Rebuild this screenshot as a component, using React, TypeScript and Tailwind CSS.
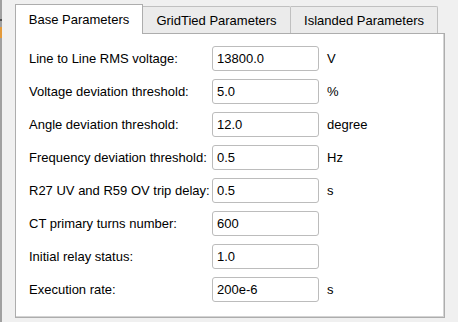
import React from "react";

const rows: { label: string; value: string; unit: string }[] = [
  { label: "Line to Line RMS voltage:", value: "13800.0", unit: "V" },
  { label: "Voltage deviation threshold:", value: "5.0", unit: "%" },
  { label: "Angle deviation threshold:", value: "12.0", unit: "degree" },
  { label: "Frequency deviation threshold:", value: "0.5", unit: "Hz" },
  { label: "R27 UV and R59 OV trip delay:", value: "0.5", unit: "s" },
  { label: "CT primary turns number:", value: "600", unit: "" },
  { label: "Initial relay status:", value: "1.0", unit: "" },
  { label: "Execution rate:", value: "200e-6", unit: "s" },
];

export default function App() {
  return (
    <div className="w-[458px] h-[322px] bg-[#f0f0f0] flex overflow-hidden font-['Liberation_Sans',Arial,sans-serif] text-[13px] text-black">
      <div className="w-[2px] flex flex-col">
        <div className="h-[19px] bg-[#a0a0a0]" />
        <div className="h-[2px] bg-[#505050]" />
        <div className="h-[6px] bg-[#a0a0a0]" />
        <div className="h-[11px] bg-[#e39a3b]" />
        <div className="flex-1 bg-[#a0a0a0]" />
      </div>
      <div className="ml-[13px] mt-[3px] w-[430px] flex flex-col">
        <div className="flex items-end h-[30px]">
          <div className="w-[128px] h-[30px] bg-white border border-b-0 border-[#adadad] flex items-center justify-center pt-[1px] relative z-10 -mb-[1px]">
            Base Parameters
          </div>
          <div className="w-[148px] h-[27px] bg-[#ebebeb] border border-l-0 border-b-0 border-[#c0c0c0] rounded-tr-[2px] flex items-center justify-center pt-[2px]">
            GridTied Parameters
          </div>
          <div className="w-[147px] h-[27px] bg-[#ebebeb] border border-l-0 border-b-0 border-[#c0c0c0] rounded-tr-[2px] flex items-center justify-center pt-[2px]">
            Islanded Parameters
          </div>
        </div>
        <div className="h-[285px] bg-white border border-[#adadad] shadow-[inset_-1px_-1px_0_#d4d4d4] pl-[13px] pt-[12px] flex flex-col gap-[8px]">
          {rows.map((r) => (
            <div key={r.label} className="flex items-center h-[25px]">
              <div className="w-[183px] whitespace-nowrap">{r.label}</div>
              <div className="w-[107px] h-[25px] border border-[#bcbcbc] rounded-[3px] flex items-center pl-[4px] bg-white">
                {r.value}
              </div>
              <div className="ml-[8px]">{r.unit}</div>
            </div>
          ))}
        </div>
      </div>
    </div>
  );
}
